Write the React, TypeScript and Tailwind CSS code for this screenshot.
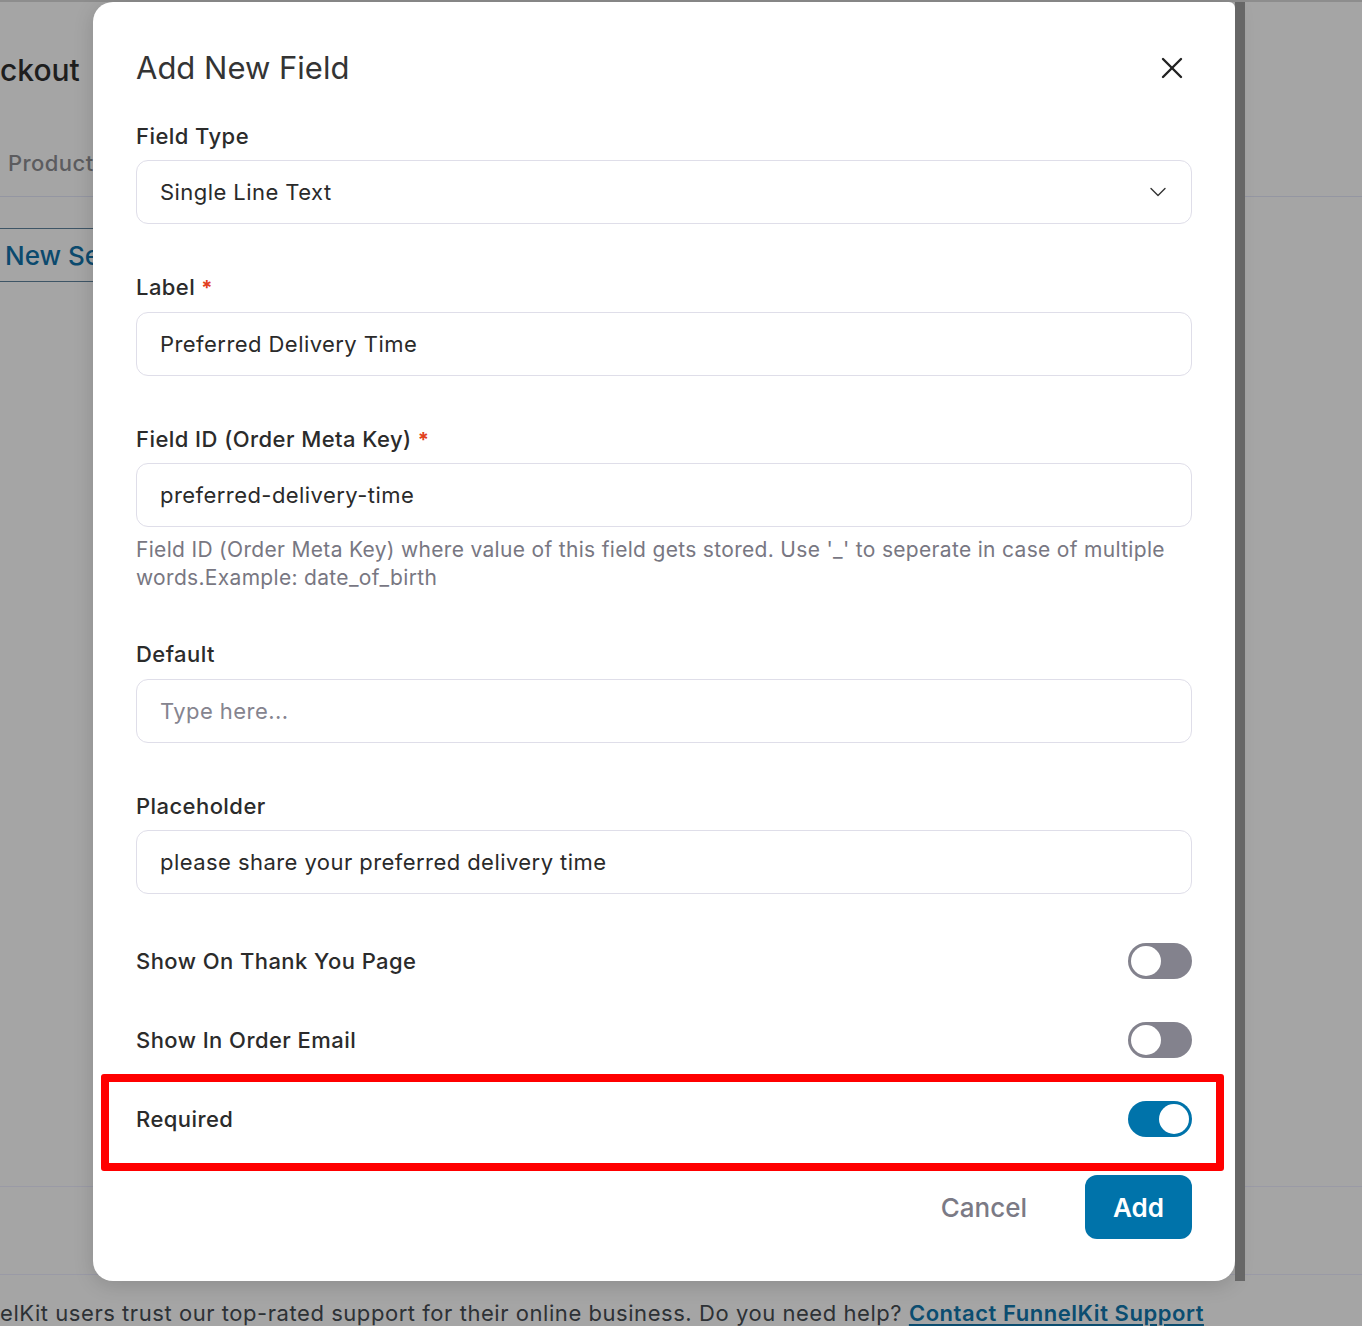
import { X, ChevronDown } from "lucide-react";

function Toggle({ on }: { on?: boolean }) {
  return (
    <div
      className={`flex h-[36px] w-[64px] shrink-0 items-center rounded-full px-[3px] ${
        on ? "justify-end bg-[#0073aa]" : "justify-start bg-[#83828d]"
      }`}
    >
      <div className="h-[30px] w-[30px] rounded-full bg-white" />
    </div>
  );
}

function FieldLabel({ text, required }: { text: string; required?: boolean }) {
  return (
    <div className="flex h-[28px] items-baseline gap-[6px] text-[22px] font-medium leading-[28px] tracking-[0.02em] text-[#2b2b2b]">
      <span>{text}</span>
      {required && <span className="text-[20px] font-bold leading-none text-[#e2401c]">*</span>}
    </div>
  );
}

function TextBox({ value, placeholder }: { value?: string; placeholder?: string }) {
  return (
    <div className="flex h-[64px] items-center rounded-[12px] border border-[#dfdee9] bg-white px-[23px] text-[22px] tracking-[0.02em]">
      {value ? (
        <span className="text-[#2a2a2a]">{value}</span>
      ) : (
        <span className="text-[#85848f]">{placeholder}</span>
      )}
    </div>
  );
}

export default function App() {
  return (
    <div className="relative h-[1326px] w-[1362px] overflow-hidden bg-[#a5a5a5] font-['Inter',sans-serif]">
      {/* page behind the dialog */}
      <div className="h-[2px] bg-[#8d8d8d]" />
      <div className="flex flex-col">
        <div className="mt-[48px] text-[30px] font-medium leading-[40px] text-[#1e1e1e]">ckout</div>
        <div className="mt-[59px] pl-[8px] text-[22px] font-medium leading-[28px] tracking-[0.02em] text-[#5c5c5f]">Products</div>
        <div className="mt-[19px] h-px bg-[#9496a2]" />
        <div className="mt-[31px] flex h-[54px] w-[300px] items-center border-y border-[#3e5566] pl-[5px] text-[26px] font-medium text-[#0b4a6e]">
          New Section
        </div>
        <div className="mt-[904px] h-px bg-[#9a9aa6]" />
        <div className="mt-[87px] h-px bg-[#9a9aa6]" />
        <div className="mt-[24px] whitespace-nowrap text-[22px] leading-[28px] tracking-[0.025em] text-[#2d3135]">
          elKit users trust our top-rated support for their online business. Do you need help?{" "}
          <span className="font-semibold text-[#0b4d70] underline underline-offset-[3px]">Contact FunnelKit Support</span>
        </div>
      </div>

      {/* dialog */}
      <div className="absolute left-[93px] top-[2px] flex h-[1279px]">
        <div className="flex w-[1142px] flex-col rounded-[20px] rounded-tr-[6px] bg-white px-[43px] pt-[46px] shadow-[0_4px_20px_rgba(0,0,0,0.15)]">
          <div className="flex items-center justify-between">
            <h2 className="text-[31px] leading-[40px] text-[#343434]">Add New Field</h2>
            <X className="mr-[2px] h-[36px] w-[36px] text-[#222]" strokeWidth={1.6} />
          </div>

          <div className="mt-[34px]">
            <FieldLabel text="Field Type" />
            <div className="mt-[10px] flex h-[64px] items-center justify-between rounded-[12px] border border-[#dfdee9] pl-[23px] pr-[19px] text-[22px] tracking-[0.02em] text-[#2a2a2a]">
              <span>Single Line Text</span>
              <ChevronDown className="h-[28px] w-[28px] text-[#333]" strokeWidth={1.2} />
            </div>
          </div>

          <div className="mt-[49px]">
            <FieldLabel text="Label" required />
            <div className="mt-[11px]">
              <TextBox value="Preferred Delivery Time" />
            </div>
          </div>

          <div className="mt-[49px]">
            <FieldLabel text="Field ID (Order Meta Key)" required />
            <div className="mt-[10px]">
              <TextBox value="preferred-delivery-time" />
            </div>
            <p className="mt-[9px] text-[21px] leading-[28px] tracking-[0.015em] text-[#787782]">
              Field ID (Order Meta Key) where value of this field gets stored. Use '_' to seperate in case of multiple
              words.Example: date_of_birth
            </p>
          </div>

          <div className="mt-[48px]">
            <FieldLabel text="Default" />
            <div className="mt-[11px]">
              <TextBox placeholder="Type here..." />
            </div>
          </div>

          <div className="mt-[49px]">
            <FieldLabel text="Placeholder" />
            <div className="mt-[10px]">
              <TextBox value="please share your preferred delivery time" />
            </div>
          </div>

          <div className="mt-[49px] flex items-center justify-between">
            <span className="text-[22px] font-medium tracking-[0.02em] text-[#2b2b2b]">Show On Thank You Page</span>
            <Toggle />
          </div>

          <div className="mt-[43px] flex items-center justify-between">
            <span className="text-[22px] font-medium tracking-[0.02em] text-[#2b2b2b]">Show In Order Email</span>
            <Toggle />
          </div>

          <div className="relative mt-[43px] flex items-center justify-between">
            <span className="text-[22px] font-medium tracking-[0.02em] text-[#2b2b2b]">Required</span>
            <Toggle on />
            {/* annotation box */}
            <div className="pointer-events-none absolute -left-[35px] -right-[32px] -top-[27px] -bottom-[34px] rounded-[3px] border-[8px] border-[#ff0000]" />
          </div>

          <div className="mt-[38px] flex items-center justify-end gap-[58px]">
            <button className="text-[26px] font-medium text-[#7b7a85]">Cancel</button>
            <button className="h-[64px] w-[107px] rounded-[12px] bg-[#0073aa] text-[26px] font-semibold text-white">
              Add
            </button>
          </div>
        </div>
        <div className="w-[10px] bg-[#676767]" />
      </div>
    </div>
  );
}
